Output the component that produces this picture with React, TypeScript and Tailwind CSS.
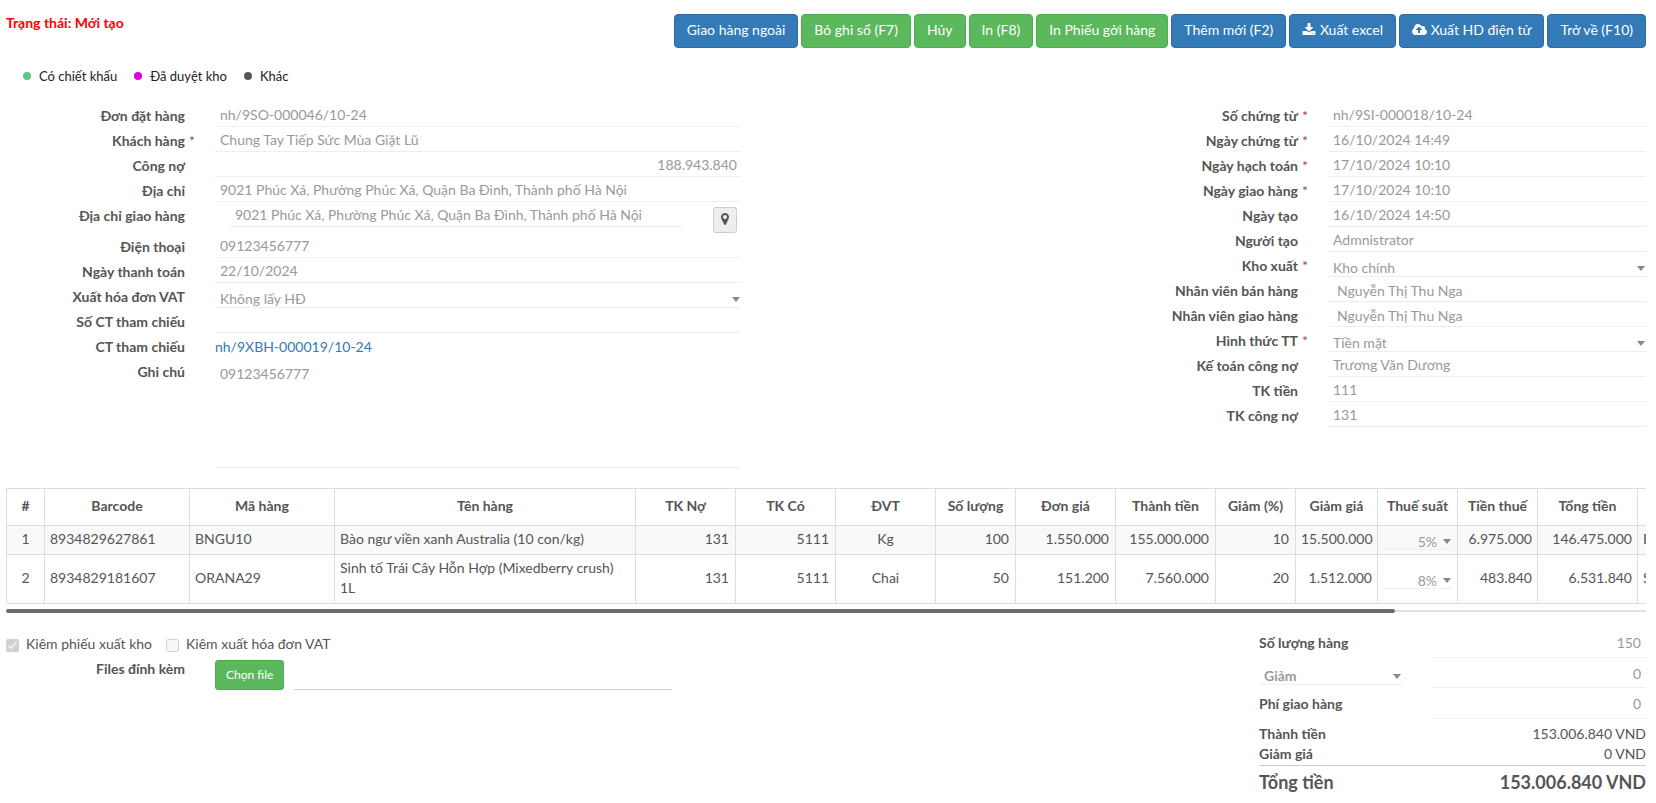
import { useState } from 'react';
import type { ReactNode } from 'react';

interface FieldProps {
    id: string;
    label: string;
    value?: string;
    required?: boolean;
    kind?: 'text' | 'select' | 'tag' | 'number';
}

const line = 'block w-full border-b border-[#eee] bg-transparent text-[#999] outline-none';

const DownloadIcon = () => (
    <svg viewBox="0 0 1792 1792" className="inline-block h-3.5 w-3.5 align-[-2px]" fill="currentColor" aria-hidden="true">
        <path d="M1344 1344q0-26-19-45t-45-19-45 19-19 45 19 45 45 19 45-19 19-45zm256 0q0-26-19-45t-45-19-45 19-19 45 19 45 45 19 45-19 19-45zm128-224v320q0 40-28 68t-68 28h-1472q-40 0-68-28t-28-68v-320q0-40 28-68t68-28h465l135 136q58 56 136 56t136-56l136-136h464q40 0 68 28t28 68zm-325-569q17 41-14 70l-448 448q-18 19-45 19t-45-19l-448-448q-31-29-14-70 17-39 59-39h256v-448q0-26 19-45t45-19h256q26 0 45 19t19 45v448h256q42 0 59 39z" />
    </svg>
);

const CloudUploadIcon = () => (
    <svg viewBox="0 0 1920 1792" className="inline-block h-3.5 w-[15px] align-[-2px]" fill="currentColor" aria-hidden="true">
        <path d="M1280 864q0-14-9-23l-352-352q-9-9-23-9t-23 9l-351 351q-10 12-10 24 0 14 9 23t23 9h224v352q0 13 9.5 22.5t22.5 9.5h192q13 0 22.5-9.5t9.5-22.5v-352h224q13 0 22.5-9.5t9.5-22.5zm640 288q0 159-112.5 271.5t-271.5 112.5h-1088q-185 0-316.5-131.5t-131.5-316.5q0-130 70-240t188-165q-2-30-2-43 0-212 150-362t362-150q156 0 285.5 87t188.5 231q71-62 166-62 106 0 181 75t75 181q0 76-41 138 130 31 213.5 135.5t83.5 238.5z" />
    </svg>
);

const MarkerIcon = () => (
    <svg viewBox="0 0 1792 1792" className="h-3.5 w-3.5" fill="currentColor" aria-hidden="true">
        <path d="M1152 640q0-106-75-181t-181-75-181 75-75 181 75 181 181 75 181-75 75-181zm256 0q0 109-33 179l-364 774q-16 33-47.5 52t-67.5 19-67.5-19-46.5-52l-365-774q-33-70-33-179 0-212 150-362t362-150 362 150 150 362z" />
    </svg>
);

const Caret = () => (
    <svg viewBox="0 0 8 5" className="pointer-events-none absolute right-px bottom-1.5 h-[5px] w-2" fill="#888" aria-hidden="true">
        <path d="M0 0h8L4 5z" />
    </svg>
);

const toolbar: { text: string; tone: 'blue' | 'green'; icon?: ReactNode }[] = [
    { text: 'Giao hàng ngoài', tone: 'blue' },
    { text: 'Bỏ ghi sổ (F7)', tone: 'green' },
    { text: 'Hủy', tone: 'green' },
    { text: 'In (F8)', tone: 'green' },
    { text: 'In Phiếu gởi hàng', tone: 'green' },
    { text: 'Thêm mới (F2)', tone: 'blue' },
    { text: 'Xuất excel', tone: 'blue', icon: <DownloadIcon /> },
    { text: 'Xuất HD điện tử', tone: 'blue', icon: <CloudUploadIcon /> },
    { text: 'Trở về (F10)', tone: 'blue' },
];

const tones = {
    blue: 'bg-[#337ab7] border-[#2e6da4] hover:bg-[#286090]',
    green: 'bg-[#5cb85c] border-[#4cae4c] hover:bg-[#449d44]',
};

const legend = [
    { text: 'Có chiết khấu', dot: 'bg-[#5fc38f]' },
    { text: 'Đã duyệt kho', dot: 'bg-[#dd00dd]' },
    { text: 'Khác', dot: 'bg-[#555]' },
];

const documentFields: FieldProps[] = [
    { id: 'so-chung-tu', label: 'Số chứng từ', value: 'nh/9SI-000018/10-24', required: true },
    { id: 'ngay-chung-tu', label: 'Ngày chứng từ', value: '16/10/2024 14:49', required: true },
    { id: 'ngay-hach-toan', label: 'Ngày hạch toán', value: '17/10/2024 10:10', required: true },
    { id: 'ngay-giao-hang', label: 'Ngày giao hàng', value: '17/10/2024 10:10', required: true },
    { id: 'ngay-tao', label: 'Ngày tạo', value: '16/10/2024 14:50' },
    { id: 'nguoi-tao', label: 'Người tạo', value: 'Admnistrator' },
    { id: 'kho-xuat', label: 'Kho xuất', value: 'Kho chính', required: true, kind: 'select' },
    { id: 'nv-ban-hang', label: 'Nhân viên bán hàng', value: 'Nguyễn Thị Thu Nga', kind: 'tag' },
    { id: 'nv-giao-hang', label: 'Nhân viên giao hàng', value: 'Nguyễn Thị Thu Nga', kind: 'tag' },
    { id: 'hinh-thuc-tt', label: 'Hình thức TT', value: 'Tiền mặt', required: true, kind: 'select' },
    { id: 'ke-toan', label: 'Kế toán công nợ', value: 'Trương Văn Dương' },
    { id: 'tk-tien', label: 'TK tiền', value: '111' },
    { id: 'tk-cong-no', label: 'TK công nợ', value: '131' },
];

const columns = [
    { title: '#', width: 'w-[38px]', align: 'px-[5px] text-center' },
    { title: 'Barcode', width: 'w-[145px]', align: 'px-[5px] text-left' },
    { title: 'Mã hàng', width: 'w-[145px]', align: 'px-[5px] text-left' },
    { title: 'Tên hàng', width: 'w-[301px]', align: 'px-[5px] text-left' },
    { title: 'TK Nợ', width: 'w-[100px]', align: 'pr-1.5 pl-[5px] text-right' },
    { title: 'TK Có', width: 'w-[100px]', align: 'pr-1.5 pl-[5px] text-right' },
    { title: 'ĐVT', width: 'w-[100px]', align: 'px-[5px] text-center' },
    { title: 'Số lượng', width: 'w-[80px]', align: 'pr-1.5 pl-[5px] text-right' },
    { title: 'Đơn giá', width: 'w-[100px]', align: 'pr-1.5 pl-[5px] text-right' },
    { title: 'Thành tiền', width: 'w-[100px]', align: 'pr-1.5 pl-[5px] text-right' },
    { title: 'Giảm (%)', width: 'w-[80px]', align: 'pr-1.5 pl-[5px] text-right' },
    { title: 'Giảm giá', width: 'w-[82px]', align: 'px-[5px] text-right' },
    { title: 'Thuế suất', width: 'w-[80px]', align: 'px-[5px] text-right' },
    { title: 'Tiền thuế', width: 'w-[80px]', align: 'px-[5px] text-right' },
    { title: 'Tổng tiền', width: 'w-[100px]', align: 'px-[5px] text-right' },
    { title: '', width: 'w-[300px]', align: 'px-[5px] text-left whitespace-nowrap' },
];

const TAX_COLUMN = 12;

const rows = [
    ['1', '8934829627861', 'BNGU10', 'Bào ngư viền xanh Australia (10 con/kg)', '131', '5111', 'Kg', '100', '1.550.000', '155.000.000', '10', '15.500.000', '5%', '6.975.000', '146.475.000', 'Bào ngư viền xanh Australia'],
    ['2', '8934829181607', 'ORANA29', 'Sinh tố Trái Cây Hỗn Hợp (Mixedberry crush) 1L', '131', '5111', 'Chai', '50', '151.200', '7.560.000', '20', '1.512.000', '8%', '483.840', '6.531.840', 'Sinh tố Trái Cây Hỗn Hợp'],
];

const Row = ({ id, label, required, wide, children }: { id?: string; label: string; required?: boolean; wide?: boolean; children: ReactNode }) => (
    <div className="flex">
        <div className={`flex shrink-0 pt-1 ${wide ? 'w-[209px]' : 'w-[174px]'}`}>
            <label htmlFor={id} className="flex-1 text-right font-bold">{label}</label>
            <span className="w-[30px] pl-1 text-[#a94442]">{required && '*'}</span>
        </div>
        <div className="min-w-0 flex-1">{children}</div>
    </div>
);

const Field = ({ id, label, value = '', required, kind = 'text', wide }: FieldProps & { wide?: boolean }) => (
    <Row id={id} label={label} required={required} wide={wide}>
        {kind === 'select' ? (
            <div className="relative">
                <select id={id} defaultValue={value} className={`${line} h-[25px] appearance-none px-[5px] pt-1.5`}>
                    <option>{value}</option>
                </select>
                <Caret />
            </div>
        ) : (
            <input
                id={id}
                type="text"
                readOnly
                defaultValue={value}
                className={`${line} h-[25px] ${kind === 'tag' ? 'pt-0.5 pr-[5px] pl-[9px]' : ''} ${kind === 'text' ? 'px-[5px]' : ''} ${kind === 'number' ? 'px-1 text-right' : ''}`}
            />
        )}
    </Row>
);

const App = () => {
    const [note, setNote] = useState('09123456777');

    return (
        <div className="min-h-screen bg-white pt-3.5 pr-2.5 pb-4 pl-1.5 font-['Lato',sans-serif] text-sm/[20px] text-[#555]">
            <header className="flex items-start justify-between">
                <p className="leading-[18px] font-bold text-[#f00]">Trạng thái: Mới tạo</p>
                <div className="flex gap-[3px]">
                    {toolbar.map(btn => (
                        <button
                            key={btn.text}
                            type="button"
                            className={`h-[34px] rounded border px-3 pb-0.5 whitespace-nowrap text-white ${tones[btn.tone]}`}
                        >
                            {btn.icon} {btn.text}
                        </button>
                    ))}
                </div>
            </header>

            {/* Row colour legend */}
            <ul className="mt-[18px] flex gap-[17px] pl-[17px] text-[13px]/[20px] text-[#222]">
                {legend.map(item => (
                    <li key={item.text} className="flex items-center gap-2">
                        <span className={`h-2 w-2 rounded-full ${item.dot}`} />
                        {item.text}
                    </li>
                ))}
            </ul>

            <main>
                <div className="mt-4 flex items-start justify-between">
                    <section className="w-9/20 pr-[3px]">
                        <Field wide id="don-dat-hang" label="Đơn đặt hàng" value="nh/9SO-000046/10-24" />
                        <Field wide id="khach-hang" label="Khách hàng" value="Chung Tay Tiếp Sức Mùa Giặt Lũ" required />
                        <Field wide id="cong-no" label="Công nợ" value="188.943.840" kind="number" />
                        <Field wide id="dia-chi" label="Địa chỉ" value="9021 Phúc Xá, Phường Phúc Xá, Quận Ba Đình, Thành phố Hà Nội" />
                        <Row wide id="dia-chi-giao" label="Địa chỉ giao hàng">
                            <div className="flex h-[31px] items-start pr-1 pl-[15px]">
                                <input
                                    id="dia-chi-giao"
                                    type="text"
                                    readOnly
                                    defaultValue="9021 Phúc Xá, Phường Phúc Xá, Quận Ba Đình, Thành phố Hà Nội"
                                    className={`${line} h-[25px] min-w-0 flex-1 px-[5px]`}
                                />
                                <button
                                    type="button"
                                    aria-label="Bản đồ"
                                    className="mt-[5px] ml-[30px] flex h-[26px] w-6 items-center justify-center rounded-[3px] border border-[#ccc] bg-[#eee] pb-0.5"
                                >
                                    <MarkerIcon />
                                </button>
                            </div>
                        </Row>
                        <Field wide id="dien-thoai" label="Điện thoại" value="09123456777" />
                        <Field wide id="ngay-thanh-toan" label="Ngày thanh toán" value="22/10/2024" />
                        <Field wide id="xuat-vat" label="Xuất hóa đơn VAT" value="Không lấy HĐ" kind="select" />
                        <Field wide id="so-ct" label="Số CT tham chiếu" />
                        <Row wide label="CT tham chiếu">
                            <a href="#" className="block h-[25px] pt-1 text-[#337ab7]">nh/9XBH-000019/10-24</a>
                        </Row>
                        <Row wide id="ghi-chu" label="Ghi chú">
                            <textarea
                                id="ghi-chu"
                                value={note}
                                onChange={e => setNote(e.target.value)}
                                className={`${line} h-[110px] resize-none px-[5px] pt-1.5`}
                            />
                        </Row>
                    </section>
                    <section className="w-3/10">
                        {documentFields.map(field => (
                            <Field key={field.id} {...field} />
                        ))}
                    </section>
                </div>

                {/* Order lines */}
                <div className="mt-5 overflow-x-hidden">
                    <table className="w-[1931px] table-fixed border-collapse border border-[#ddd]">
                        <thead>
                            <tr>
                                {columns.map(col => (
                                    <th key={col.title} className={`border border-[#ddd] pt-[7px] pb-[9px] text-center font-bold ${col.width}`}>{col.title}</th>
                                ))}
                            </tr>
                        </thead>
                        <tbody>
                            {rows.map(row => (
                                <tr key={row[0]} className="odd:bg-[#f9f9f9]">
                                    {row.map((cell, i) => (
                                        <td
                                            key={columns[i].title}
                                            className={`border border-[#ddd] ${i === TAX_COLUMN ? 'py-1' : 'pt-[3px] pb-[5px]'} ${columns[i].align}`}
                                        >
                                            {i === TAX_COLUMN ? (
                                                <div className="relative">
                                                    <select
                                                        aria-label={`Thuế suất dòng ${row[0]}`}
                                                        defaultValue={cell}
                                                        className={`${line} h-5 appearance-none pt-0.5 pr-[15px] text-right [text-align-last:right]`}
                                                    >
                                                        <option>{cell}</option>
                                                    </select>
                                                    <Caret />
                                                </div>
                                            ) : cell}
                                        </td>
                                    ))}
                                </tr>
                            ))}
                        </tbody>
                    </table>
                </div>
                <div className="mt-[5px] flex h-1 items-center">
                    <div className="h-1 w-[84.7%] rounded-full bg-[#6b6b6b]" />
                    <div className="h-0.5 flex-1 bg-[#e0e0e0]" />
                </div>

                <div className="mt-5 flex items-start justify-between">
                    <section className="w-9/20">
                        <div className="flex h-[26px] items-start gap-3.5 pt-px">
                            <label className="flex gap-[7px]">
                                <input type="checkbox" disabled defaultChecked className="mt-[5px] h-[13px] w-[13px]" />
                                Kiêm phiếu xuất kho
                            </label>
                            <label className="flex gap-[7px]">
                                <input type="checkbox" disabled className="mt-[5px] h-[13px] w-[13px]" />
                                Kiêm xuất hóa đơn VAT
                            </label>
                        </div>
                        <div className="flex">
                            <label htmlFor="files" className="w-[179px] text-right font-bold">Files đính kèm</label>
                            <button type="button" className={`mt-px ml-[30px] h-[30px] rounded-[3px] border px-2.5 text-xs text-white ${tones.green}`}>
                                Chọn file
                            </button>
                            <input id="files" type="text" readOnly className="mt-px mr-[72px] ml-2.5 h-[30px] min-w-0 flex-1 border-b border-[#ccc] outline-none" />
                        </div>
                    </section>

                    <section className="w-[387px]">
                        <div className="flex h-[25px] justify-between">
                            <label htmlFor="so-luong" className="font-bold">Số lượng hàng</label>
                            <input id="so-luong" type="text" readOnly defaultValue="150" className="w-[214px] border-b border-[#eee] px-[5px] pb-1 text-right text-[#999]" />
                        </div>
                        <div className="flex h-[30px] justify-between">
                            <div className="relative h-[27px] w-[143px]">
                                <select aria-label="Loại giảm" className={`${line} h-[27px] appearance-none px-[5px] pt-2 font-bold`}>
                                    <option>Giảm</option>
                                </select>
                                <Caret />
                            </div>
                            <input aria-label="Giảm" type="text" readOnly defaultValue="0" className="w-[214px] border-b border-[#eee] px-[5px] pt-0.5 text-right text-[#999]" />
                        </div>
                        <div className="flex h-[31px] justify-between">
                            <label htmlFor="phi-giao" className="pt-1.5 font-bold">Phí giao hàng</label>
                            <input id="phi-giao" type="text" readOnly defaultValue="0" className="w-[214px] border-b border-[#eee] px-[5px] pt-0.5 text-right text-[#999]" />
                        </div>
                        <dl className="pt-[5px]">
                            <div className="flex justify-between">
                                <dt className="font-bold">Thành tiền</dt>
                                <dd>153.006.840 VND</dd>
                            </div>
                            <div className="flex justify-between">
                                <dt className="font-bold">Giảm giá</dt>
                                <dd>0 VND</dd>
                            </div>
                            <div className="mt-px flex justify-between border-t border-[#ccc] pt-[3px] text-lg/[26px] font-bold">
                                <dt>Tổng tiền</dt>
                                <dd>153.006.840 VND</dd>
                            </div>
                        </dl>
                    </section>
                </div>
            </main>
        </div>
    );
};

export default App;
